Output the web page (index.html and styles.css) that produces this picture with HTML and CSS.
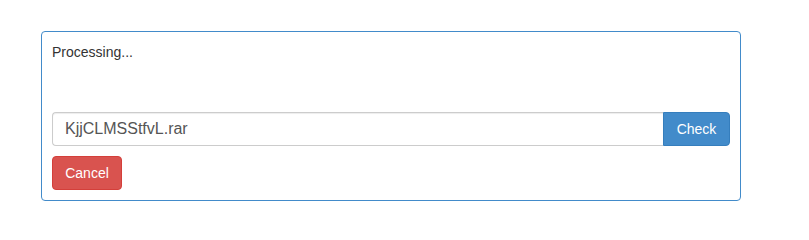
FILE: index.html
```html
<!DOCTYPE html>
<html>
<head>
<meta charset="utf-8">
<link rel="stylesheet" href="styles.css">
</head>
<body>
<div class="panel">
  <div class="status">Processing...</div>
  <div class="spacer"></div>
  <div class="input-group">
    <input class="form-control" type="text" value="KjjCLMSStfvL.rar">
    <button class="btn btn-primary btn-attached">Check</button>
  </div>
  <button class="btn btn-danger">Cancel</button>
</div>
</body>
</html>
```
FILE: styles.css
```css
html, body {
  margin: 0;
  padding: 0;
  background: #fff;
}
body {
  font-family: "Liberation Sans", Arial, Helvetica, sans-serif;
  font-size: 14px;
  line-height: 20px;
  color: #333;
  padding: 31px 0 0 41px;
}
.panel {
  box-sizing: border-box;
  width: 700px;
  height: 170px;
  border: 1px solid #428bca;
  border-radius: 4px;
  padding: 10px;
  display: flex;
  flex-direction: column;
  align-items: flex-start;
}
.status {
  height: 20px;
}
.spacer {
  height: 50px;
}
.input-group {
  display: flex;
  width: 100%;
  height: 34px;
  margin-bottom: 10px;
}
.form-control {
  box-sizing: border-box;
  flex: 1;
  height: 34px;
  margin: 0;
  padding: 4px 12px;
  font-family: inherit;
  font-size: 16px;
  color: #555;
  border: 1px solid #ccc;
  border-right: 0;
  border-radius: 4px 0 0 4px;
  box-shadow: inset 0 1px 1px rgba(0,0,0,.075);
  outline: none;
}
.btn {
  box-sizing: border-box;
  height: 34px;
  margin: 0;
  padding: 6px 12px;
  font-family: inherit;
  font-size: 14px;
  line-height: 20px;
  color: #fff;
  border: 1px solid transparent;
  border-radius: 4px;
  cursor: pointer;
}
.btn-primary {
  background: #428bca;
  border-color: #357ebd;
}
.btn-attached {
  width: 67px;
  border-radius: 0 4px 4px 0;
}
.btn-danger {
  width: 70px;
  background: #d9534f;
  border-color: #d43f3a;
}
```
